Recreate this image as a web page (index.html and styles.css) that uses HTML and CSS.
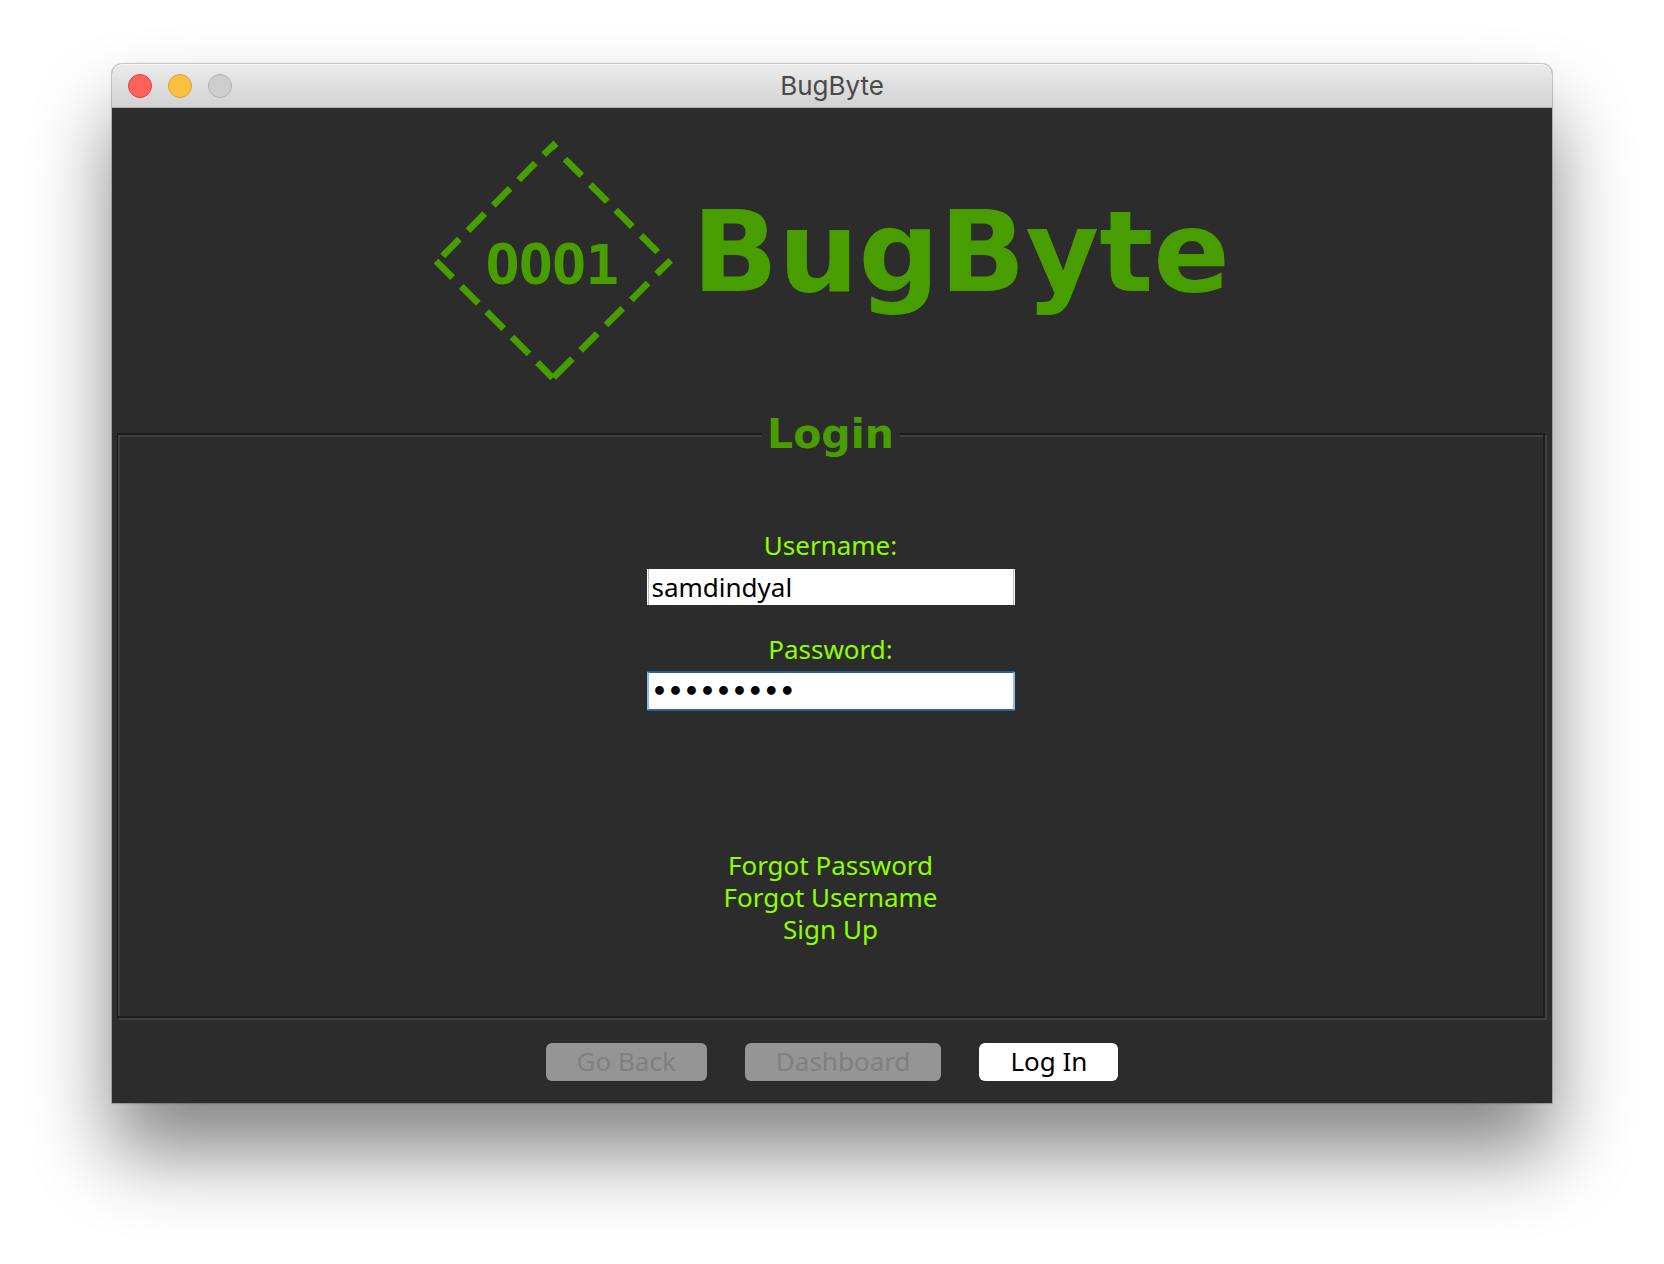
FILE: index.html
```html
<!DOCTYPE html>
<html lang="en">
<head>
<meta charset="utf-8">
<title>BugByte</title>
<link rel="stylesheet" href="styles.css">
</head>
<body>
<main class="window">
  <header class="titlebar">
    <div class="lights">
      <button class="light close" type="button" aria-label="Close"></button>
      <button class="light minimize" type="button" aria-label="Minimize"></button>
      <button class="light zoom" type="button" aria-label="Zoom" disabled></button>
    </div>
    <span class="title">BugByte</span>
  </header>
  <form class="content">
    <div class="brand">
      <svg class="emblem" viewBox="42 30 720 726" aria-hidden="true">
        <path class="dashes" d="M371 74L400 46L408 55M346 99L296 150M270 175L220 226M194 251L144 302M118 327L68 378M48 393L98 443M124 469L175 520M200 545L251 596M276 621L327 672M352 697L398 744M401 742L457 686M532 611L482 661M608 535L558 585M684 459L634 510M752 391L710 432M713 366L663 316M637 290L587 240M562 215L511 164M485 137L435 87"/>
        <text class="digits" x="398" y="461">000<tspan class="slab">1</tspan></text>
      </svg>
      <h1 class="wordmark">BugByte</h1>
    </div>
    <fieldset class="panel">
      <legend class="legend">Login</legend>
      <div class="fields">
        <div class="field">
          <label for="username">Username:</label>
          <input class="input" id="username" type="text" value="samdindyal">
        </div>
        <div class="field">
          <label for="password">Password:</label>
          <input class="input active" id="password" type="password" value="bugbyte01">
        </div>
      </div>
      <nav class="links">
        <a href="#forgot-password">Forgot Password</a>
        <a href="#forgot-username">Forgot Username</a>
        <a href="#sign-up">Sign Up</a>
      </nav>
    </fieldset>
    <div class="actions">
      <button class="button" type="button" disabled>Go Back</button>
      <button class="button" type="button" disabled>Dashboard</button>
      <button class="button" type="submit">Log In</button>
    </div>
  </form>
</main>
</body>
</html>
```
FILE: styles.css
```css
* {
  box-sizing: border-box;
}

body {
  margin: 0;
  padding: 64px 112px 160px;
  background: #fff;
  font: 26px/32px "Noto Sans", "Open Sans", sans-serif;
}

.window {
  border-radius: 10px 10px 0 0;
  background: #2c2c2c;
  box-shadow: 0 0 1px 1px rgba(0, 0, 0, 0.22), 0 50px 80px rgba(0, 0, 0, 0.48);
}

.titlebar {
  display: grid;
  grid-template-columns: 1fr auto 1fr;
  align-items: center;
  height: 44px;
  padding: 0 16px;
  border-bottom: 1px solid #b0b0b0;
  border-radius: 10px 10px 0 0;
  background: linear-gradient(#ececec, #d2d2d2);
  box-shadow: inset 0 1px 0 #f6f6f6;
}

.lights {
  display: flex;
  gap: 16px;
}

.light {
  width: 24px;
  height: 24px;
  padding: 0;
  border: 1px solid;
  border-radius: 50%;
}

.close {
  border-color: #e0443e;
  background: #fd625d;
}

.minimize {
  border-color: #dea034;
  background: #fdbf40;
}

.zoom {
  border-color: #b0b0b0;
  background: #cecece;
}

.title {
  color: #4a4a4a;
  font-family: Inter, sans-serif;
  font-size: 26px;
}

.brand {
  display: flex;
  align-items: center;
  justify-content: center;
  gap: 18px;
  padding: 32px 0 29px;
}

.emblem {
  width: 240px;
  height: 242px;
}

.dashes {
  fill: none;
  stroke: #489e00;
  stroke-width: 20;
}

.digits {
  fill: #489e00;
  font: bold 174px "Noto Sans", sans-serif;
  text-anchor: middle;
}

.slab {
  font: bold 168px "DejaVu Sans Mono", monospace;
}

.wordmark {
  margin: 0;
  padding-bottom: 18px;
  color: #489e00;
  font: bold 113px/110px "DejaVu Sans", sans-serif;
}

.panel {
  min-width: 0;
  margin: 0 7px 0 5px;
  padding: 71px 0;
  border: 2px solid #1c1c1c;
  border-left-width: 1px;
  box-shadow: 2px 2px 0 #404040, inset 2px 2px 0 #404040;
}

.legend {
  margin: 0 auto;
  padding: 0 6px;
  background: #2c2c2c;
  color: #489e00;
  font: bold 41px/46px "DejaVu Sans", sans-serif;
}

.fields {
  display: flex;
  flex-direction: column;
  align-items: center;
  gap: 26px;
  padding-top: 1px;
}

.field {
  display: flex;
  flex-direction: column;
  align-items: center;
  gap: 6px;
  width: 368px;
  color: #8cff00;
}

.input {
  width: 100%;
  height: 36px;
  margin: 2px 0;
  padding: 0 4px;
  border: solid #fff;
  border-width: 0 1px;
  border-radius: 0;
  outline: none;
  background: #fff;
  box-shadow: inset 1px 0 0 #bbb, inset -1px 0 0 #bbb;
  color: #000;
  font: inherit;
}

.active {
  height: 40px;
  margin: 0;
  padding: 0 3px;
  border: 2px solid;
  border-color: #2d6296 #8dbdf0;
  border-radius: 2px;
  box-shadow: none;
  font-family: "DejaVu Sans", sans-serif;
  font-size: 25px;
  font-weight: bold;
}

.links {
  display: flex;
  flex-direction: column;
  align-items: center;
  padding-top: 138px;
}

.links a {
  color: #8cff00;
  text-decoration: none;
}

.actions {
  display: flex;
  justify-content: center;
  gap: 38px;
  padding: 25px 0 22px;
}

.button {
  height: 38px;
  padding: 0 31px 2px;
  border: 0;
  border-radius: 6px;
  background: #fff;
  color: #000;
  font: inherit;
}

.button:disabled {
  background: #959595;
  color: #808080;
}
```
